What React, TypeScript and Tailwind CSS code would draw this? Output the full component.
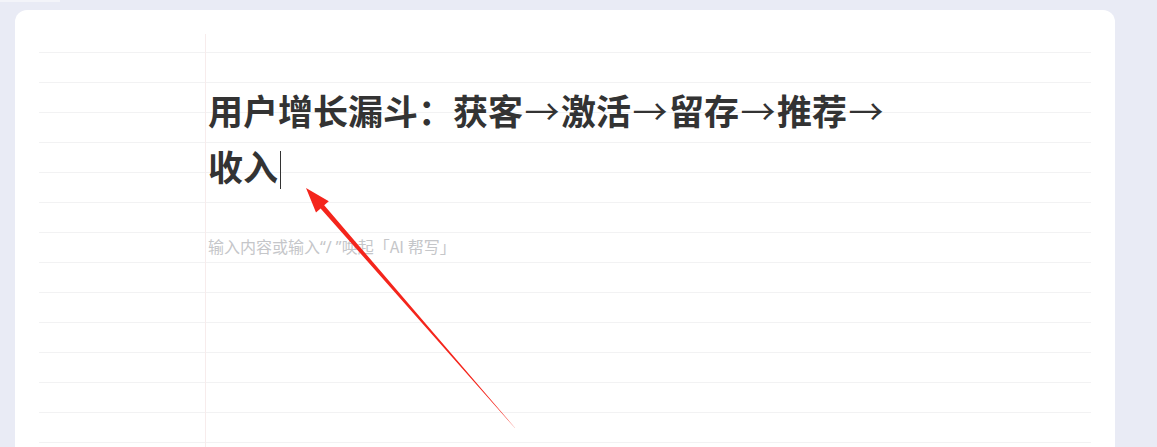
import React from "react";

const cjk = { fontFamily: '"Noto Sans CJK SC", "Noto Sans", sans-serif' };
const latin = { fontFamily: '"Noto Sans", "Noto Sans CJK SC", sans-serif' };

// annotation arrow drawn over the editor
const AnnotationArrow: React.FC = () => (
  <svg className="absolute inset-0 pointer-events-none" width="1157" height="447" viewBox="0 0 1157 447" aria-hidden>
    <polygon
      points="306,188 328.8,201.3 324.2,205.3 515.3,428.2 514.7,427.8 320.6,208.4 316.0,212.4"
      fill="#f4251c"
    />
  </svg>
);

const Arrow: React.FC = () => <span className="inline-block w-[38px] text-center font-normal">→</span>;

const App: React.FC = () => {
  return (
    <div className="relative w-[1157px] h-[447px] overflow-hidden bg-[#e9ebf5]" style={cjk}>
      <div className="h-[2px] w-[60px] bg-[#f3f4f9]" />
      <div className="ml-[15px] mt-[8px] w-[1100px] h-[460px] rounded-[12px] bg-white pt-[13px] px-[24px]">
        {/* lined paper */}
        <div className="flow-root h-[440px] bg-[repeating-linear-gradient(to_bottom,transparent_0,transparent_29px,#f2f2f3_29px,#f2f2f3_30px)]">
          <div className="ml-[166px] mt-[11px] h-[420px] border-l border-[#f7ecec] pl-[2px] pt-[48px]">
            <h1 className="max-w-[700px] text-[35px] leading-[56px] font-bold text-[#333333]">
              用户增长漏斗：获客<Arrow />激活<Arrow />留存<Arrow />推荐<Arrow />收入
              <span className="inline-block w-px h-[38px] bg-[#333333] ml-[2px] align-[-8px]" />
            </h1>
            <p className="mt-[42px] text-[16px] leading-[20px] text-[#c5c6c9]">
              输入内容或输入<span style={latin}>“/ ”</span>唤起「AI 帮写」
            </p>
          </div>
        </div>
      </div>
      <AnnotationArrow />
    </div>
  );
};

export default App;
